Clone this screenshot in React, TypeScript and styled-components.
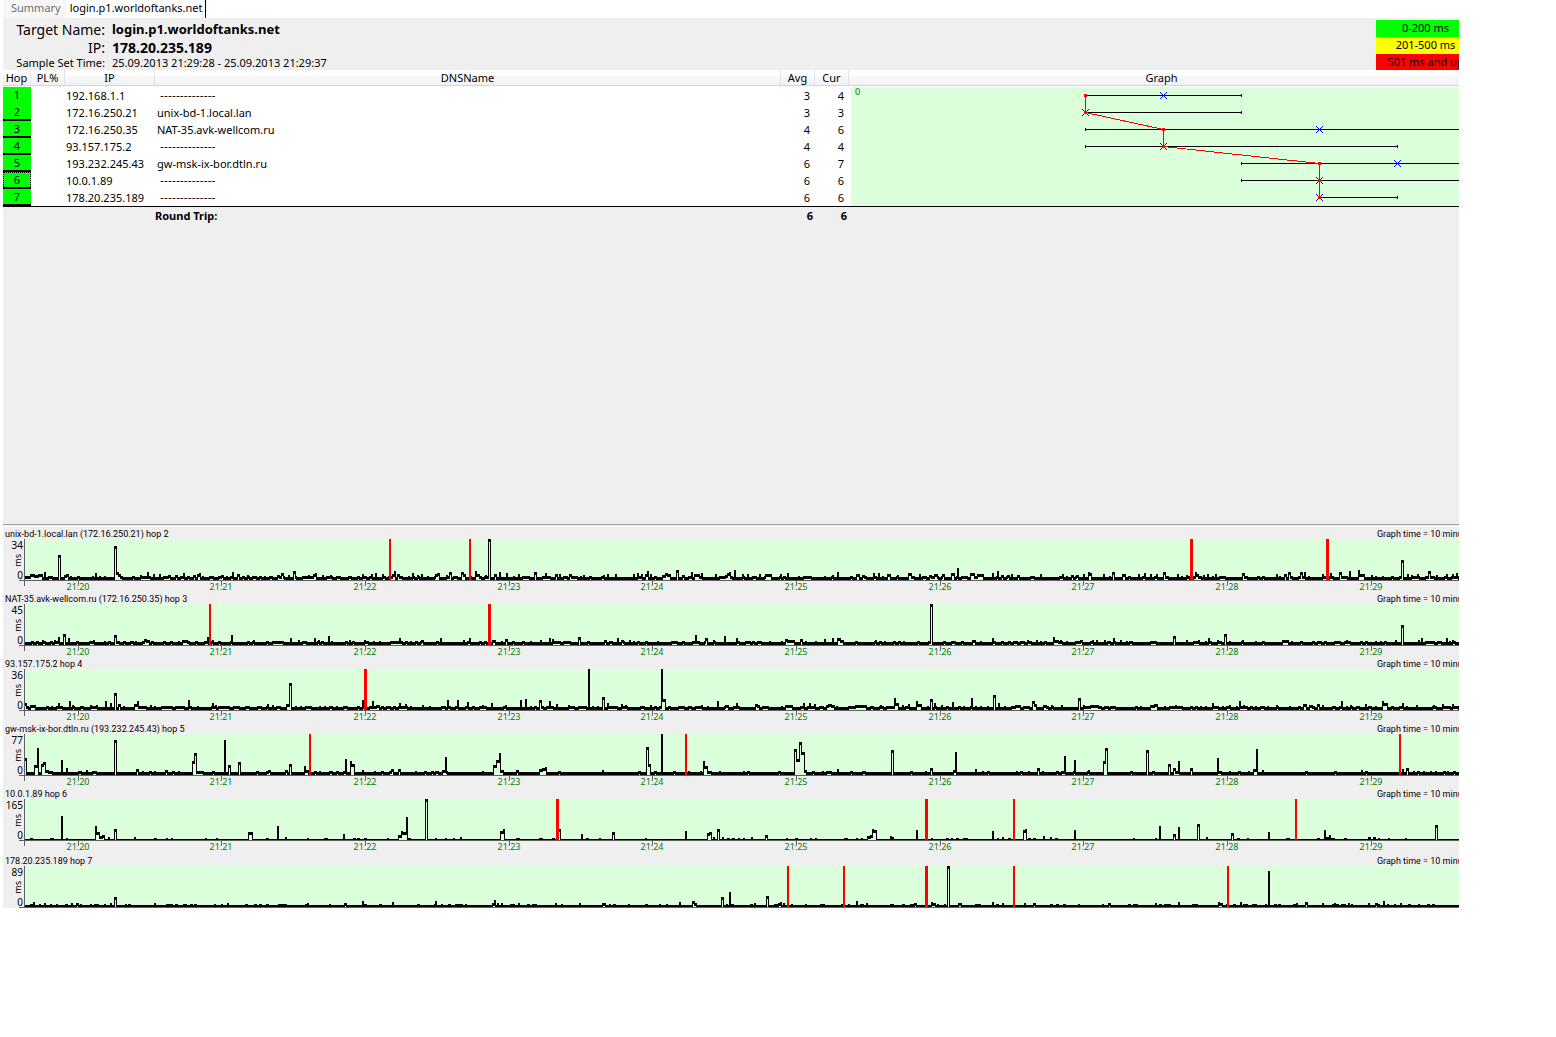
import React from "react";
import styled, { createGlobalStyle, css } from "styled-components";

const GlobalStyle = createGlobalStyle`
  *, *::before, *::after { box-sizing: border-box; }
  body {
    margin: 0;
    background: #fff;
    color: #000;
    font: 11px/17px "Noto Sans", "Open Sans", sans-serif;
  }
`;

/* ---------- shell ---------- */

const Viewport = styled.main`
  margin: 0 97px 0 3px;
  overflow: hidden;
`;

const Content = styled.div`
  margin-right: -16px;
`;

const Tabs = styled.nav`
  display: flex;
  height: 18px;
`;

const Tab = styled.button<{ $active?: boolean }>`
  height: 18px;
  border: 0;
  padding: 0 3px 3px;
  font: inherit;
  line-height: 15px;
  white-space: nowrap;
  color: #6d6d6d;
  background: #f7f7f7;
  ${(p) =>
    p.$active
      ? css`
          color: #000;
          background: #fff;
          border-right: 1px solid #000;
        `
      : css`
          padding-left: 8px;
          padding-right: 6px;
        `}
`;

/* ---------- target header ---------- */

const Header = styled.header`
  display: flex;
  justify-content: space-between;
  height: 52px;
  background: #efefef;
`;

const Facts = styled.dl`
  display: grid;
  grid-template-columns: 102px auto;
  grid-template-rows: 19px 17px 13px;
  column-gap: 7px;
  align-items: center;
  margin: 2px 0 0;
  white-space: nowrap;
`;

const Term = styled.dt<{ $small?: boolean }>`
  justify-self: end;
  font-size: ${(p) => (p.$small ? 11 : 14)}px;
  line-height: ${(p) => (p.$small ? 13 : 17)}px;
`;

const Fact = styled.dd<{ $size: number }>`
  margin: 0;
  font-size: ${(p) => p.$size}px;
  font-weight: ${(p) => (p.$size > 11 ? 700 : 400)};
  line-height: ${(p) => (p.$size > 11 ? 17 : 13)}px;
`;

const Legend = styled.ul`
  width: 99px;
  margin: 2px 0 0;
  padding: 0;
  list-style: none;
  text-align: center;
`;

const LegendItem = styled.li<{ $color: string }>`
  height: 17px;
  line-height: 15px;
  background: ${(p) => p.$color};
  &:last-child {
    height: 16px;
  }
`;

/* ---------- hop table ---------- */

const HopPanel = styled.section`
  min-height: 454px;
  background: #efefef;
`;

const HopTable = styled.table`
  width: 100%;
  table-layout: fixed;
  border-collapse: separate;
  border-spacing: 0;
  background: #fff;
`;

const HeadCell = styled.th`
  height: 17px;
  padding: 0;
  vertical-align: top;
  font-weight: 400;
  line-height: 15px;
  border-right: 1px solid #e2e3e5;
  background: linear-gradient(
    #fff 0 6px,
    #f7f8fa 6px,
    #f1f2f4 15px,
    #d5d5d5 15px 16px,
    #fff 16px
  );
`;

const Cell = styled.td`
  height: 17px;
  padding: 0 1px;
  line-height: 17px;
  white-space: nowrap;
`;

const NumCell = styled(Cell)`
  padding-right: 5px;
  text-align: right;
`;

const HopCell = styled(Cell)<{ $rule: boolean; $focus: boolean }>`
  text-align: center;
  line-height: 15px;
  background: #0f0;
  border-bottom: 2px solid ${(p) => (p.$rule ? "#000" : "#0f0")};
  ${(p) =>
    p.$focus &&
    css`
      outline: 1px dotted #000;
      outline-offset: -1px;
    `}
`;

const NameCell = styled(Cell)<{ $unknown: boolean }>`
  padding-left: ${(p) => (p.$unknown ? 5 : 2)}px;
  ${(p) =>
    p.$unknown &&
    css`
      font-family: "DejaVu Sans", sans-serif;
    `}
`;

const GraphCell = styled.td`
  padding: 0 0 0 2px;
  vertical-align: top;
`;

const HopGraph = styled.svg`
  display: block;
  width: 100%;
  height: 119px;
  background: #daffda;
`;

const TotalCell = styled.td<{ $num?: boolean }>`
  height: 18px;
  padding: 0 ${(p) => (p.$num ? 2 : 0)}px 0 0;
  border-top: 1px solid #000;
  background: #efefef;
  font-weight: 700;
  text-align: ${(p) => (p.$num ? "right" : "left")};
`;

/* ---------- timelines ---------- */

const Timelines = styled.section`
  padding-top: 2px;
  border-top: 1px solid #a0a0a0;
  background: linear-gradient(#efefef 0 1px, #fff 1px 2px, #efefef 2px);
`;

const Timeline = styled.figure<{ $last: boolean }>`
  margin: 0;
  padding-top: ${(p) => (p.$last ? 2 : 0)}px;
  font-size: 9px;
  line-height: 12px;
`;

const Caption = styled.figcaption`
  display: flex;
  justify-content: space-between;
  height: 12px;
  padding: 0 0 0 2px;
  font-family: Roboto, "Noto Sans", sans-serif;
  line-height: 14px;
  white-space: nowrap;
`;

const PlotRow = styled.div<{ $last: boolean }>`
  display: flex;
  height: ${(p) => (p.$last ? 42 : 53)}px;
`;

const Scale = styled.div`
  display: flex;
  flex: none;
  flex-direction: column;
  align-items: flex-end;
  justify-content: space-between;
  width: 20px;
  height: 42px;
  font-size: 10px;
`;

const Unit = styled.span`
  margin-right: 1px;
  font-size: 9px;
  line-height: 9px;
  writing-mode: vertical-rl;
  transform: rotate(180deg);
`;

const Plot = styled.svg`
  flex: 1;
  height: 100%;
  min-width: 0;
  margin-left: -4px;
`;

/* ---------- data ---------- */

type Hop = {
  hop: number;
  ip: string;
  name?: string;
  avg: number;
  cur: number;
  min: number;
  max: number;
};

const hops: Hop[] = [
  { hop: 1, ip: "192.168.1.1", avg: 3, cur: 4, min: 3, max: 5 },
  { hop: 2, ip: "172.16.250.21", name: "unix-bd-1.local.lan", avg: 3, cur: 3, min: 3, max: 5 },
  { hop: 3, ip: "172.16.250.35", name: "NAT-35.avk-wellcom.ru", avg: 4, cur: 6, min: 3, max: 45 },
  { hop: 4, ip: "93.157.175.2", avg: 4, cur: 4, min: 3, max: 7 },
  { hop: 5, ip: "193.232.245.43", name: "gw-msk-ix-bor.dtln.ru", avg: 6, cur: 7, min: 5, max: 77 },
  { hop: 6, ip: "10.0.1.89", avg: 6, cur: 6, min: 5, max: 165 },
  { hop: 7, ip: "178.20.235.189", avg: 6, cur: 6, min: 6, max: 7 },
];

type Series = {
  title: string;
  peak: number;
  base: number;
  noise: number;
  /** "position:height[:width]" for each sample that stands out */
  samples: string;
  /** position and width of each lost-packet bar */
  lost: [number, number][];
};

const series: Series[] = [
  {
    title: "unix-bd-1.local.lan (172.16.250.21) hop 2",
    peak: 34,
    base: 3,
    noise: 0.3,
    samples:
      "28:4 30:6 33:6 35:5 38:6 40:6 44:8:2 58:25 64:5 66:6 95:7:2 114:34 117:8:2 119:6:2 140:5:2 147:8:2 153:6:2 159:6:2 168:5 175:5 183:7:2 193:5 197:6 199:7:2 221:5 232:8:2 237:6 247:5:2 277:5 281:7 288:5:2 293:9 308:5:2 313:6 315:7:2 322:5:2 330:5:2 362:6:2 371:6:2 375:7:2 382:6:2 392:6 394:9:2 397:6 412:7:2 417:5:2 421:6:2 435:6 437:7:3 446:5:2 449:8 461:8:3 464:6:2 475:9:2 477:6 485:5:2 488:41 494:6 499:8:2 506:7:2 518:6:2 526:4 534:8 545:7:2 555:6 559:6:2 569:6:3 583:5:2 603:5:2 607:6:2 615:6:2 633:6:2 637:7:2 641:6:2 645:6 647:9:2 650:6:2 662:5 665:7 668:6 676:10 682:5 691:8:2 694:6 697:6 701:7:2 715:6:2 725:5 727:7:2 729:8:2 734:10:2 742:6:2 747:6:2 759:6:2 765:6:7 780:6:2 787:7:2 832:5:2 837:8:2 856:6:4 862:5:3 873:7:2 878:7:2 887:6:4 897:5:2 908:7:4 919:6:2 929:5:3 934:6:4 942:6:3 951:7:4 957:12:2 970:7:5 977:6:7 992:7:2 997:9:2 1001:5 1007:5 1011:6:2 1017:5 1040:6:2 1062:6:2 1071:5 1076:5 1083:6:2 1088:8:2 1090:7:2 1103:6:2 1112:8 1122:6:4 1138:6:2 1144:7:2 1150:6:2 1156:6:2 1163:8 1177:6:2 1186:5:2 1195:8:2 1197:6:2 1203:5:2 1207:6:2 1215:6:2 1242:7 1276:6:2 1284:6 1288:8 1300:8 1304:8:2 1322:6:2 1330:7:2 1339:8 1349:9:2 1358:10:2 1360:6:5 1371:5:2 1401:20 1407:6:2 1411:5:2 1417:6:2 1428:9 1436:5:2 1446:6:2 1452:6:2 1456:7:2",
    lost: [[389, 2], [469, 2], [1190, 3], [1326, 3]],
  },
  {
    title: "NAT-35.avk-wellcom.ru (172.16.250.35) hop 3",
    peak: 45,
    base: 3,
    noise: 0.22,
    samples:
      "31:4 42:5:2 50:4 54:5:2 58:8:2 63:11 68:7:2 76:4 93:5:2 114:10 123:4 131:4 144:6:3 147:5:3 151:4 170:4 182:5:6 195:4 207:8:2 212:5:2 231:10:2 247:4 253:5:2 272:4:12 290:7:2 298:5:2 314:7:2 318:5:2 328:9:2 349:5:2 364:5:2 373:4:2 390:4:10 399:7:2 415:4 421:5 440:7:2 463:5:2 469:7:2 492:5:4 505:6:3 512:4 540:5:2 549:7:2 552:6:2 568:4 578:8 587:4 604:5 617:7:2 621:5 629:5:2 645:4 682:4 695:10:2 705:7 713:5:2 724:9:2 736:7:2 745:4:6 785:6:3 788:5:5 793:5:2 800:6 824:6:2 832:7:2 837:7:4 841:5:3 855:4 875:5:2 893:4 928:4 930:41 943:4 952:4:4 961:4 972:5:4 992:7:2 1020:4 1027:5:2 1036:5:2 1053:8:2 1055:5:4 1060:5:2 1075:4:8 1080:5:3 1092:5:2 1096:5:2 1104:5:2 1113:7:2 1120:5:2 1129:4 1173:9 1186:5:2 1194:4:4 1198:5:2 1208:7:2 1217:5:2 1224:11 1242:5:2 1282:5:7 1300:4 1324:4 1346:5:2 1395:5:2 1401:20 1418:5:2 1421:7:2 1446:7:2 1452:5:2",
    lost: [[209, 2], [488, 3]],
  },
  {
    title: "93.157.175.2 hop 4",
    peak: 36,
    base: 3,
    noise: 0.4,
    samples:
      "25:7:2 30:5:6 46:4 58:7:2 69:9:2 72:5:2 90:5:2 96:5:2 105:9:2 110:7:2 114:17 118:6:3 134:6:3 137:9:2 150:5:2 188:10:2 212:7:2 215:5:2 267:6:2 272:5:2 286:6:3 289:27 362:10:2 372:9:2 376:5:4 399:7:2 405:6:2 422:5:2 447:10:2 457:10:2 467:8:2 482:5:2 491:7:2 505:5:2 520:10:2 525:11:2 539:10 549:9:2 556:6:2 568:5:2 588:41:2 602:13 607:7:2 621:6:2 625:5:2 650:5:2 661:41:2 663:11 701:5:2 717:9:2 725:5:4 736:7:2 755:6:3 758:5:2 785:5:8 803:7:2 809:7:2 814:6:2 826:5 828:6:4 832:5 855:5:12 880:5:2 894:12:2 896:7 902:5:2 908:6:2 916:9:2 918:6:4 930:11 934:7:2 941:5:2 952:8:2 971:12:2 993:15 998:7:2 1015:5:6 1032:9:3 1035:6:2 1043:5:4 1051:5:2 1061:5:2 1078:12 1083:5:2 1090:5:9 1110:4:6 1150:5:4 1154:6:4 1175:5:2 1212:7:2 1229:5:2 1239:9:2 1243:5:2 1276:5:2 1303:6:4 1309:5:4 1317:6:3 1322:5:2 1341:9:2 1350:5:2 1365:6:2 1382:9:2 1384:7:4 1402:7:2 1416:5:2 1433:5:2 1442:6:2 1452:6:2",
    lost: [[364, 3]],
  },
  {
    title: "gw-msk-ix-bor.dtln.ru (193.232.245.43) hop 5",
    peak: 77,
    base: 3,
    noise: 0.1,
    samples:
      "25:17:2 34:10 37:27:2 41:11 43:13 46:5 49:4 61:15:2 66:7:2 78:4:4 86:5:2 93:4:4 114:35 136:6 149:4 165:5 172:4 192:14 194:22 197:4:5 212:4 224:35:2 228:10 238:13 256:4 268:5 289:11 285:5 304:9:2 306:5 336:4 345:16:2 350:14:2 352:11:3 362:5:2 381:4 389:4:3 391:6:3 398:6 435:4 442:5 445:18:2 493:10 496:15 499:22:2 501:5 516:5 539:6:3 542:7:3 545:8:2 558:4 602:5:2 638:4 646:28 649:11:2 661:41:2 673:4 703:14:2 705:9 708:4:4 778:4 794:26 797:16:2 799:33 802:23 805:5:2 829:4 837:6:2 863:4 891:25 910:4 930:7 953:5:2 955:23:2 975:6:2 987:4 1037:7 1061:4 1064:19:2 1074:15:2 1088:5:2 1103:14:2 1105:27 1130:4 1146:25 1152:4 1168:11 1173:7 1178:14:2 1190:7 1217:17:2 1253:6 1256:26:2 1262:5:2 1305:4 1334:4 1361:5:2 1402:6:2 1406:7 1417:4 1443:4 1453:4",
    lost: [[309, 2], [685, 2], [1399, 2]],
  },
  {
    title: "10.0.1.89 hop 6",
    peak: 165,
    base: 1,
    noise: 0.02,
    samples:
      "30:2 50:2:4 61:24:2 66:2:2 95:14:2 97:8:3 100:4:2 102:5 108:3:2 114:11 134:3:2 154:2 166:2:2 171:2:2 205:2:2 248:8:5 277:14:2 285:3:2 307:2:2 324:2:4 343:6:2 353:2 387:2:2 398:5 401:9:2 403:8:3 406:23:2 408:2 425:41 435:2:2 445:2:2 460:3:2 500:9 503:11:2 516:2:4 540:2 552:2 558:11 581:6:2 586:2 612:8 645:2:2 685:9:2 707:7 709:8 713:3:2 717:11 722:3:2 727:2 732:2 751:3:2 765:5 786:2:2 810:2:2 844:2:4 856:2:2 861:2:2 867:4 870:5:2 872:11:2 874:10 890:4:2 892:3:2 916:10:2 931:2:2 951:2:2 956:2 963:2:2 992:9:2 997:2:2 1002:3:2 1023:10:2 1025:11:2 1028:2 1033:2 1043:4:2 1050:3:2 1055:2 1074:10:2 1133:2:2 1155:2:2 1159:14:2 1173:6 1178:13:2 1197:16 1206:3:2 1231:7 1237:2 1247:2:2 1268:8:2 1286:2:4 1324:10:2 1326:3 1329:5:2 1331:2:4 1344:2 1368:3 1373:3 1378:2:2 1388:2:2 1405:2:2 1435:15",
    lost: [[556, 3], [925, 3], [1013, 2], [1295, 2]],
  },
  {
    title: "178.20.235.189 hop 7",
    peak: 89,
    base: 2,
    noise: 0.15,
    samples:
      "30:3:3 33:5:2 44:4:2 50:3:2 71:4:2 76:4 90:3:2 110:4:2 114:10 128:3 154:4:2 170:3 190:3 227:4:2 245:3 279:3:8 307:4:2 344:4 362:6:2 379:3 392:5:2 435:6:2 455:3:6 492:4:2 494:7:2 497:4:2 501:4:2 518:4:2 555:4:2 579:4:2 602:4:4 645:3 679:5:2 692:6 695:4:2 721:10 729:15:2 731:3 750:3 754:4:2 766:11 778:4:2 780:5:2 783:4:2 820:3:5 856:6:2 861:3 866:4:2 890:3:4 902:3 914:4 931:5:2 933:4 947:41 958:4:4 975:3:6 992:5:2 1002:4:2 1024:4:2 1033:4 1050:3 1108:4 1135:3 1155:4:2 1159:3 1178:5:2 1192:3 1218:5:2 1220:4 1240:5:2 1252:3 1268:36:2 1278:3 1296:4:2 1305:5 1322:4:2 1334:4:2 1348:4:2 1368:4:2 1375:4 1383:6:2 1400:4:2 1408:3",
    lost: [[787, 2], [843, 2], [925, 3], [1013, 2], [1227, 2]],
  },
];

const PLOT_HEIGHT = 41;
const PLOT_LEFT = 25;
const SVG_LEFT = 19;
const SECOND = 2.394;
const COLUMN_COUNT = 1455;
const PEN = 3;

/** Height of the trace for every pixel column of the plot. */
function traceColumns({ base, noise, samples }: Series, seed: number): number[] {
  let state = seed * 7919 + 17;
  const random = () => {
    state = (state * 1103515245 + 12345) % 2147483648;
    return state / 2147483648;
  };
  const columns: number[] = Array(COLUMN_COUNT).fill(base);
  for (let second = 0; second * SECOND < COLUMN_COUNT; second++) {
    const level = random() < noise ? base + 1 : base;
    columns.fill(level, Math.floor(second * SECOND), Math.floor((second + 1) * SECOND));
  }
  for (const entry of samples.split(" ")) {
    const [at, height, width = 3] = entry.split(":").map(Number);
    columns.fill(height, at - PLOT_LEFT, at - PLOT_LEFT + width);
  }
  return columns;
}

/** Stepped trace: a cap over each level and a 1px riser wherever the level changes. */
function tracePath(columns: number[]): string {
  const rect = (x: number, y: number, w: number, h: number) => `M${x} ${y}h${w}v${h}h${-w}z`;
  const offset = PLOT_LEFT - SVG_LEFT;
  let d = "";
  let start = 0;
  while (start < columns.length) {
    const value = columns[start];
    let end = start + 1;
    while (end < columns.length && columns[end] === value) end++;
    const top = PLOT_HEIGHT - value;
    const before = columns[start - 1] ?? value;
    const after = columns[end] ?? value;
    d += rect(start + offset, top, end - start, Math.min(PEN, value));
    if (before < value) {
      d += rect(start + offset, top, 1, value - before + Math.min(PEN, before));
    }
    if (after < value) {
      d += rect(end - 1 + offset, top, 1, value - after + Math.min(PEN, after));
    }
    start = end;
  }
  return d;
}

const minutes = [78, 221, 365, 509, 652, 796, 940, 1083, 1227, 1371].map((x, i) => ({
  x: x - SVG_LEFT,
  label: `21:${20 + i}`,
}));

/* ---------- parts ---------- */

const MS = 78;
const rowY = (i: number) => 8.5 + i * 17;

function RouteGraph() {
  return (
    <HopGraph shapeRendering="crispEdges" role="img" aria-label="Latency by hop">
      <text x="4" y="8" fontSize="9" fill="#008000">0</text>
      {hops.map((h, i) => {
        const y = rowY(i);
        const from = h.min * MS + 0.5;
        const to = h.max * MS + 0.5;
        return (
          <path
            key={h.hop}
            d={`M${from} ${y}H${to}M${from} ${y - 1.5}v3M${to} ${y - 1.5}v3`}
            stroke="#000"
          />
        );
      })}
      <polyline
        points={hops.map((h, i) => `${h.avg * MS + 0.5},${rowY(i)}`).join(" ")}
        fill="none"
        stroke="#f00"
      />
      {hops.map((h, i) => (
        <React.Fragment key={h.hop}>
          <path d={`M${h.cur * MS - 3} ${rowY(i) - 3.5}l7 7m0 -7l-7 7`} stroke="#00f" />
          <rect x={h.avg * MS - 1} y={rowY(i) - 1.5} width="3" height="3" fill="#f00" />
        </React.Fragment>
      ))}
    </HopGraph>
  );
}

function TimelineChart({ data, index, last }: { data: Series; index: number; last: boolean }) {
  return (
    <Timeline $last={last}>
      <Caption>
        <span>{data.title}</span>
        <span>Graph time = 10 minutes</span>
      </Caption>
      <PlotRow $last={last}>
        <Scale>
          <span>{data.peak}</span>
          <Unit>ms</Unit>
          <span>0</span>
        </Scale>
        <Plot shapeRendering="crispEdges">
          <rect x="6" y="0" width="100%" height={PLOT_HEIGHT} fill="#daffda" />
          <path d={tracePath(traceColumns(data, index + 1))} />
          {data.lost.map(([x, width]) => (
            <rect key={x} x={x - SVG_LEFT} width={width} height={PLOT_HEIGHT} fill="#f00" />
          ))}
          <rect x="0" y={PLOT_HEIGHT} width="100%" height="1" fill="#606060" />
          <rect x="5" y="0" width="1" height={last ? 42 : 47} fill="#606060" />
          {!last &&
            minutes.map(({ x, label }) => (
              <React.Fragment key={label}>
                <rect x={x} y={PLOT_HEIGHT} width="1" height="5" fill="#606060" />
                <text x={x} y="51" fontSize="9" textAnchor="middle" fill="#008000">
                  {label}
                </text>
              </React.Fragment>
            ))}
        </Plot>
      </PlotRow>
    </Timeline>
  );
}

export default function App() {
  return (
    <>
      <GlobalStyle />
      <Viewport>
        <Content>
          <Tabs>
            <Tab type="button">Summary</Tab>
            <Tab type="button" $active>login.p1.worldoftanks.net</Tab>
          </Tabs>
          <Header>
            <Facts>
              <Term>Target Name:</Term>
              <Fact $size={13}>login.p1.worldoftanks.net</Fact>
              <Term>IP:</Term>
              <Fact $size={14}>178.20.235.189</Fact>
              <Term $small>Sample Set Time:</Term>
              <Fact $size={11}>25.09.2013 21:29:28 - 25.09.2013 21:29:37</Fact>
            </Facts>
            <Legend>
              <LegendItem $color="#0f0">0-200 ms</LegendItem>
              <LegendItem $color="#ff0">201-500 ms</LegendItem>
              <LegendItem $color="#f00">501 ms and up</LegendItem>
            </Legend>
          </Header>
          <HopPanel>
            <HopTable>
              <colgroup>
                <col width="28" />
                <col width="34" />
                <col width="90" />
                <col />
                <col width="34" />
                <col width="34" />
                <col />
              </colgroup>
              <thead>
                <tr>
                  <HeadCell>Hop</HeadCell>
                  <HeadCell>PL%</HeadCell>
                  <HeadCell>IP</HeadCell>
                  <HeadCell>DNSName</HeadCell>
                  <HeadCell>Avg</HeadCell>
                  <HeadCell>Cur</HeadCell>
                  <HeadCell>Graph</HeadCell>
                </tr>
              </thead>
              <tbody>
                {hops.map((h, i) => (
                  <tr key={h.hop}>
                    <HopCell $rule={i > 0} $focus={h.hop === 6}>{h.hop}</HopCell>
                    <Cell />
                    <Cell>{h.ip}</Cell>
                    <NameCell $unknown={!h.name}>{h.name ?? "--------------"}</NameCell>
                    <NumCell>{h.avg}</NumCell>
                    <NumCell>{h.cur}</NumCell>
                    {i === 0 && (
                      <GraphCell rowSpan={hops.length}>
                        <RouteGraph />
                      </GraphCell>
                    )}
                  </tr>
                ))}
              </tbody>
              <tfoot>
                <tr>
                  <TotalCell colSpan={3} />
                  <TotalCell>Round Trip:</TotalCell>
                  <TotalCell $num>6</TotalCell>
                  <TotalCell $num>6</TotalCell>
                  <TotalCell />
                </tr>
              </tfoot>
            </HopTable>
          </HopPanel>
          <Timelines>
            {series.map((s, i) => (
              <TimelineChart key={s.title} data={s} index={i} last={i === series.length - 1} />
            ))}
          </Timelines>
        </Content>
      </Viewport>
    </>
  );
}
